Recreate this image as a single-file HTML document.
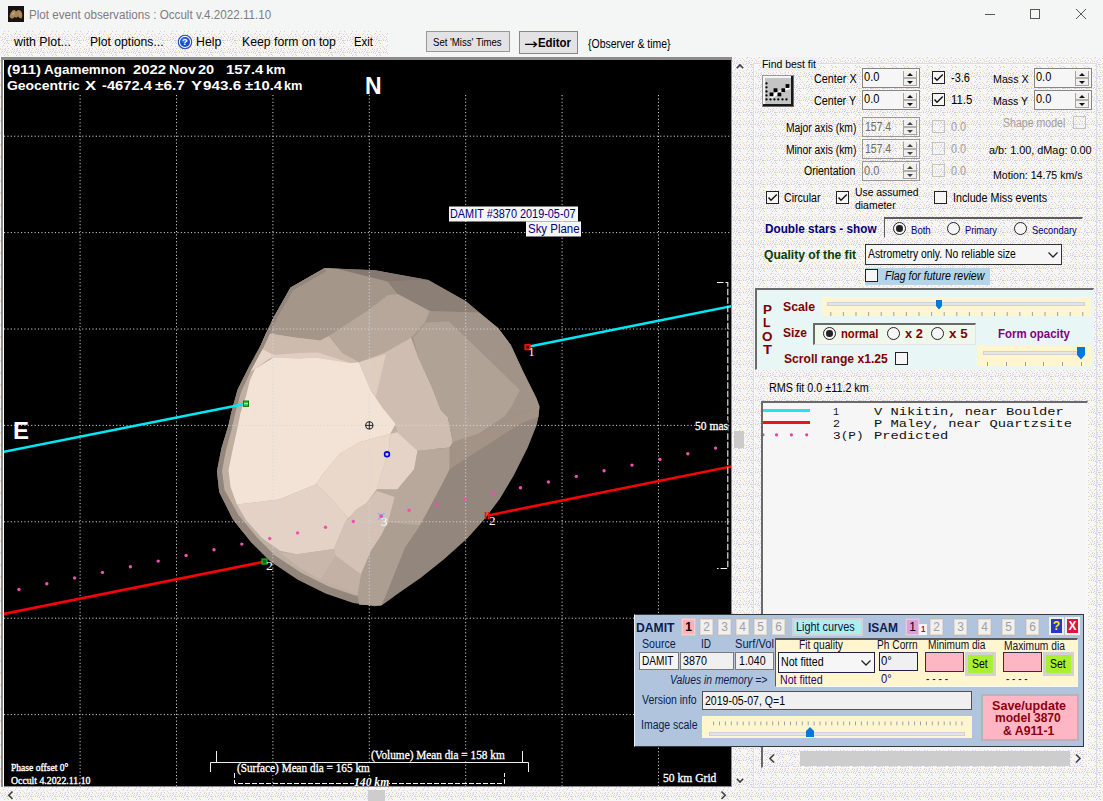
<!DOCTYPE html>
<html lang="en"><head><meta charset="utf-8"><title>Plot event observations : Occult v.4.2022.11.10</title>
<style>
html,body{margin:0;padding:0}
body{width:1103px;height:801px;position:relative;overflow:hidden;background:#f0f0f0;font-family:"Liberation Sans",sans-serif;font-size:12px}
.t{position:absolute;white-space:pre;transform-origin:0 50%}
.b{position:absolute;box-sizing:border-box}
.num{position:absolute;box-sizing:border-box;border:1px solid #8a8684;background:#f5f6f5;width:58px;height:20px}
.num.dis{background:transparent;border-color:#9a9896}
.num i{position:absolute;right:2px;top:2px;width:14px;height:15px;box-sizing:border-box;border:1px solid #a8a4a0;border-top:none;background:#f0f0f0}
.num i:before{content:"";position:absolute;left:0;right:0;top:6px;height:2px;background:#b4b0ac}
.num b{position:absolute;right:6px;width:0;height:0;border-left:3px solid transparent;border-right:3px solid transparent}
.num b.u{top:4px;border-bottom:3px solid #111}
.num b.d{top:12px;border-top:3px solid #111}
.num.dis b.u{border-bottom-color:#444}.num.dis b.d{border-top-color:#444}
.cb{position:absolute;box-sizing:border-box;width:13px;height:13px;border:1px solid #222;background:#f5f6f5}
.cb.dis{border-color:#c4c4c4;background:transparent}
.cb svg{position:absolute;left:0;top:0}
.rb{position:absolute;box-sizing:border-box;width:13px;height:13px;border:1px solid #222;border-radius:50%;background:#f5f6f5}
.rb.on:after{content:"";position:absolute;left:2.2px;top:2.2px;width:6.6px;height:6.6px;border-radius:50%;background:#222}
.nb{position:absolute;box-sizing:border-box;width:15px;height:18px;border:1px solid #c2bcb6;box-shadow:inset 0 0 0 1px #dedad6;background:#f0f0f0;color:#a0a0a0;font-size:12px;line-height:16px;text-align:center}
.tx{position:absolute;box-sizing:border-box;border:1px solid #7a7a7a;background:#f0f0f0}

</style></head>
<body>
<svg class="b" style="left:0;top:0" width="1103" height="801"><defs><pattern id="dth" width="12" height="12" patternUnits="userSpaceOnUse"><rect width="12" height="12" fill="#f6f6f6"/><rect x="2" y="3" width="1" height="1" fill="#c8ccf2"/><rect x="7" y="4" width="1" height="1" fill="#c8ccf2"/><rect x="8" y="7" width="1" height="1" fill="#c8ccf2"/><rect x="5" y="0" width="1" height="1" fill="#c8ccf2"/><rect x="5" y="2" width="1" height="1" fill="#c8ccf2"/><rect x="3" y="9" width="1" height="1" fill="#c8ccf2"/><rect x="2" y="1" width="1" height="1" fill="#c8ccf2"/><rect x="6" y="4" width="1" height="1" fill="#c8ccf2"/><rect x="4" y="7" width="1" height="1" fill="#c8ccf2"/><rect x="3" y="5" width="1" height="1" fill="#c8ccf2"/><rect x="11" y="4" width="1" height="1" fill="#c8ccf2"/><rect x="4" y="3" width="1" height="1" fill="#c8ccf2"/><rect x="1" y="4" width="1" height="1" fill="#c8ccf2"/><rect x="8" y="0" width="1" height="1" fill="#c8ccf2"/><rect x="7" y="10" width="1" height="1" fill="#c8ccf2"/><rect x="7" y="6" width="1" height="1" fill="#c8ccf2"/><rect x="7" y="2" width="1" height="1" fill="#f4d8c0"/><rect x="4" y="1" width="1" height="1" fill="#f4d8c0"/><rect x="5" y="6" width="1" height="1" fill="#f4d8c0"/><rect x="10" y="10" width="1" height="1" fill="#f4d8c0"/><rect x="0" y="1" width="1" height="1" fill="#f4d8c0"/><rect x="11" y="11" width="1" height="1" fill="#f4d8c0"/><rect x="9" y="4" width="1" height="1" fill="#f4d8c0"/><rect x="2" y="10" width="1" height="1" fill="#f4d8c0"/><rect x="8" y="4" width="1" height="1" fill="#f4d8c0"/><rect x="10" y="2" width="1" height="1" fill="#f4d8c0"/><rect x="11" y="3" width="1" height="1" fill="#f4d8c0"/><rect x="0" y="0" width="1" height="1" fill="#f4d8c0"/><rect x="10" y="6" width="1" height="1" fill="#fff6c0"/><rect x="7" y="7" width="1" height="1" fill="#fff6c0"/></pattern></defs><rect width="1103" height="801" fill="url(#dth)"/></svg>
<!-- title bar -->
<div class="b" style="left:0;top:0;width:1103px;height:31px;background:#f4f6f5"></div>
<div class="b" style="left:388px;top:31px;width:715px;height:25px;background:#f4f6f5"></div>
<div class="b" style="left:8px;top:6px;width:16px;height:16px;background:#17130f"></div>
<svg class="b" style="left:8px;top:6px" width="16" height="16"><path d="M1.5 10.5 L2.5 7 L4.5 4.5 L6.5 3.8 L8 5.5 L10 4 L12.5 4.5 L14 7 L14.3 10 L13.5 12.5 L11.5 12 L10 10.5 L8.5 11.8 L6.5 11 L5 12.5 L3 12.5 Z" fill="#a8845c"/><path d="M3.5 8.5 L5 5.8 L7 6.5 L6 9.5 Z" fill="#c8a070"/><path d="M10 6 L12.5 6.5 L13 9.5 L11 9 Z" fill="#b89064"/></svg>
<svg class="b" style="left:980px;top:4px" width="120" height="22"><g stroke="#5a5652" stroke-width="1" fill="none"><path d="M5 10.5H15"/><rect x="50.5" y="5.5" width="9" height="9"/><path d="M96 5L106 15M106 5L96 15"/></g></svg>
<!-- help icon -->
<svg class="b" style="left:177px;top:34px" width="16" height="16"><circle cx="8" cy="8" r="6.7" fill="#f4f6fa" stroke="#2848b4" stroke-width="1.1"/><circle cx="8" cy="8" r="5" fill="#1a48d2"/><circle cx="7" cy="6.4" r="2.6" fill="#4a78ea" opacity=".7"/><text x="8" y="11.4" text-anchor="middle" font-family="Liberation Sans, sans-serif" font-weight="bold" font-size="9.5" fill="#fff">?</text></svg>
<!-- toolbar buttons -->
<div class="b" style="left:426px;top:31px;width:84px;height:21px;border:1px solid #9a9692;background:#e3e2e4"></div>
<div class="b" style="left:519px;top:31px;width:59px;height:23px;border:1px solid #8a8682;background:#e3e2e4"></div>

<!-- plot frame -->
<div class="b" style="left:1px;top:57px;width:731px;height:730px;background:#8c8c8c"></div>
<div class="b" style="left:3px;top:60px;width:1px;height:727px;background:#fff"></div>
<div class="b" style="left:4px;top:60px;width:727px;height:726px;background:#000"></div>
<svg class="b" style="left:0;top:0" width="1103" height="801" viewBox="0 0 1103 801">
<defs><clipPath id="pc"><rect x="4" y="60" width="727" height="726"/></clipPath></defs>
<g clip-path="url(#pc)">
<polygon points="324.6,268.1 375.0,270.2 428.0,280.2 466.3,301.4 498.1,327.9 510.8,344.9 523.6,372.5 536.3,397.9 539.5,406.4 538.4,417.0 536.7,425.0 527.5,448.1 513.6,475.8 499.7,498.9 485.9,517.4 467.4,538.2 444.3,559.0 421.2,577.5 398.1,593.6 381.9,605.2 375.0,606.3 353.2,602.9 325.5,593.6 297.8,579.8 270.1,561.3 251.6,542.8 233.1,519.7 219.2,492.0 216.9,471.2 221.5,448.1 228.5,425.0 231.2,412.8 237.6,389.5 248.2,368.2 260.9,344.9 273.7,317.3 290.6,287.6" fill="#93867c"/>
<polygon points="276.0,320.0 263.0,347.0 251.0,370.0 241.0,392.0 235.0,414.0 232.0,428.0 226.0,450.0 222.0,471.0 224.5,490.0 238.5,515.0 257.0,537.5 275.0,555.5 301.5,573.0 328.5,586.5 355.0,595.5 381.0,598.0 384.5,598.0 404.7,547.4 420.0,525.0 440.0,430.0 430.0,311.0 330.0,300.0" fill="#bfaea2"/>
<polygon points="325.3,267.9 290.6,287.6 273.7,317.3 266.0,333.0 295.0,337.5 320.2,340.4 328.7,336.2 367.4,310.9 387.6,294.9 397.8,294.0 387.6,281.4 370.8,272.1 337.1,268.7" fill="#a5968a"/>
<polygon points="337.1,268.7 375.0,270.2 428.1,279.7 387.6,281.4" fill="#857870"/>
<polygon points="387.6,281.4 428.1,279.7 465.2,300.8 478.7,312.6 451.7,311.7 429.8,310.9 397.8,294.0" fill="#8c7f76"/>
<polygon points="328.7,336.2 367.4,310.9 387.6,294.9 397.8,294.0 429.8,310.9 424.7,322.7 411.2,337.8 384.3,353.0 359.0,362.3 342.1,353.0" fill="#b7a79b"/>
<polygon points="266.0,333.0 295.0,337.5 320.2,340.4 328.7,336.2 342.1,353.0 359.0,362.3 350.6,363.1 315.2,357.0 300.0,358.0 273.7,357.0 262.0,349.0 258.0,352.0" fill="#cdbbae"/>
<polygon points="262.0,349.0 273.7,355.0 300.0,353.0 318.0,352.5 350.6,363.1 315.2,357.5 300.0,358.5 273.7,357.5 256.0,362.0" fill="#dfcec1"/>
<polygon points="256.0,357.0 262.0,349.0 273.7,355.5 255.0,369.0 250.0,372.0" fill="#e6d5c8"/>
<polygon points="255.0,369.0 273.7,357.5 300.0,358.5 315.2,357.5 350.6,363.1 359.0,362.3 370.8,390.1 382.1,406.9 395.6,423.8 390.3,433.7 360.0,442.1 339.7,453.9 322.9,474.2 316.1,484.3 279.0,499.4 236.9,504.5 230.5,487.0 228.5,470.0 233.0,448.0 237.0,430.0 240.5,413.0 246.0,396.0 250.0,380.0" fill="#f3e3d6"/>
<polygon points="390.3,433.7 388.6,450.6 376.8,489.3 366.7,502.8 348.1,518.0 333.0,501.1 316.1,484.3 322.9,474.2 339.7,453.9 360.0,442.1" fill="#ead8ca"/>
<polygon points="236.9,504.5 279.0,499.4 316.1,484.3 333.0,501.1 348.1,518.0 344.9,523.0 333.9,549.1 296.9,554.2 280.0,550.8 262.0,538.0 246.0,520.0" fill="#e3d2c5"/>
<polygon points="359.0,362.3 384.3,353.0 411.2,337.8 418.0,356.4 431.0,385.0 441.1,410.3 447.9,417.0 452.9,442.3 449.6,447.4 417.5,450.7 397.3,432.2 395.6,423.8 382.1,406.9 370.8,390.1" fill="#cebdb0"/>
<polygon points="359.0,362.3 386.0,353.9 375.8,396.8 370.8,390.1" fill="#dfcdc0"/>
<polygon points="390.3,433.7 397.3,432.2 417.5,450.7 414.2,469.3 397.3,489.5 376.8,489.3 388.6,450.6" fill="#e4d3c6"/>
<polygon points="411.2,337.8 424.7,322.7 429.8,310.9 478.7,312.6 498.1,327.9 510.8,344.9 523.6,372.5 536.3,397.9 539.5,406.4 520.0,413.7 501.8,422.1 478.2,433.9 452.9,442.3 447.9,417.0 441.1,410.3 431.0,385.0 418.0,356.4" fill="#a19387"/>
<polygon points="413.1,337.5 426.2,322.5 448.7,321.5 463.7,335.6 519.9,389.9 512.4,404.9 504.9,416.1 478.2,433.9 452.9,442.3 447.9,417.0 441.1,410.3 431.0,385.0 418.0,356.4" fill="#b1a296"/>
<polygon points="452.9,442.3 478.2,433.9 501.8,422.1 520.0,413.7 539.5,406.4 538.4,417.0 520.0,423.8 491.7,442.3 464.7,459.2 449.6,469.3 449.6,447.4" fill="#a39386"/>
<polygon points="417.5,450.7 449.6,447.4 449.6,469.3 441.1,486.1 419.9,525.5 387.9,522.1 394.6,496.9 376.9,491.0 376.8,489.3 397.3,489.5 414.2,469.3" fill="#b8a89b"/>
<polygon points="344.9,523.0 355.8,509.5 366.7,502.8 376.9,491.0 394.6,496.9 387.9,522.1 381.1,535.6 371.0,550.8 360.9,574.4 335.6,555.8 333.9,549.1" fill="#d3c2b5"/>
<polygon points="371.0,550.8 381.1,535.6 387.9,522.1 419.9,525.5 404.7,547.4 384.5,598.0 381.1,605.6 359.2,604.7 357.5,594.6 360.9,574.4" fill="#ad9e92"/>
<polygon points="296.9,554.2 333.9,549.1 335.6,555.8 320.5,579.4 300.0,568.0 280.0,552.5" fill="#c8b7aa"/>
<polygon points="335.6,555.8 360.9,574.4 357.5,594.6 320.5,579.4" fill="#c2b1a4"/>
<clipPath id="sc"><polygon points="324.6,268.1 375.0,270.2 428.0,280.2 466.3,301.4 498.1,327.9 510.8,344.9 523.6,372.5 536.3,397.9 539.5,406.4 538.4,417.0 536.7,425.0 527.5,448.1 513.6,475.8 499.7,498.9 485.9,517.4 467.4,538.2 444.3,559.0 421.2,577.5 398.1,593.6 381.9,605.2 375.0,606.3 353.2,602.9 325.5,593.6 297.8,579.8 270.1,561.3 251.6,542.8 233.1,519.7 219.2,492.0 216.9,471.2 221.5,448.1 228.5,425.0 231.2,412.8 237.6,389.5 248.2,368.2 260.9,344.9 273.7,317.3 290.6,287.6"/></clipPath>
<polyline points="251.6,542.8 233.1,519.7 219.2,492.0 216.9,471.2 221.5,448.1 228.5,425.0 231.2,412.8 237.6,389.5 248.2,368.2 260.9,344.9 273.7,317.3 290.6,287.6 324.6,268.1" fill="none" stroke="#93867c" stroke-width="7" stroke-linejoin="round" clip-path="url(#sc)"/>
<g stroke="#d6d6d6" stroke-width="1" stroke-dasharray="1.1 2.3" fill="none">
<path d="M80.1 95V786"/>
<path d="M176.5 95V786"/>
<path d="M272.9 95V786"/>
<path d="M369.3 95V786"/>
<path d="M465.7 95V786"/>
<path d="M562.1 95V786"/>
<path d="M658.5 95V786"/>
<path d="M4 136.2H731"/>
<path d="M4 232.6H731"/>
<path d="M4 329.0H731"/>
<path d="M4 425.4H731"/>
<path d="M4 521.8H731"/>
<path d="M4 618.2H731"/>
<path d="M4 714.6H731"/>
</g>
<g stroke-width="2.6" fill="none" stroke-linecap="butt">
<path d="M0 452.5L246 403.7" stroke="#00e8f4"/>
<path d="M527 347.1L735 305.4" stroke="#00e8f4"/>
<path d="M0 614.7L265 561.5" stroke="#f80404"/>
<path d="M488 515.4L735 465.7" stroke="#f80404"/>
</g>
<rect x="243.5" y="401" width="5" height="5.4" fill="#30c030" stroke="#0a7a0a" stroke-width="1"/>
<path d="M244 403.7h4" stroke="#d8f4d8" stroke-width="1"/>
<rect x="262" y="559" width="5" height="5" fill="#0c700c" stroke="#28b428" stroke-width="1.2"/>
<rect x="525.3" y="344.8" width="4.6" height="4.6" fill="#501010" stroke="#f01010" stroke-width="1.8"/>
<path d="M485.5 512v7M488.5 512v7" stroke="#f01010" stroke-width="1.6"/>
<circle cx="18.9" cy="589.4" r="1.7" fill="#f050b0"/>
<circle cx="46.8" cy="583.7" r="1.7" fill="#f050b0"/>
<circle cx="74.6" cy="578.0" r="1.7" fill="#f050b0"/>
<circle cx="102.5" cy="572.4" r="1.7" fill="#f050b0"/>
<circle cx="130.4" cy="566.8" r="1.7" fill="#f050b0"/>
<circle cx="158.2" cy="561.1" r="1.7" fill="#f050b0"/>
<circle cx="186.1" cy="555.5" r="1.7" fill="#f050b0"/>
<circle cx="214.0" cy="549.8" r="1.7" fill="#f050b0"/>
<circle cx="241.8" cy="544.1" r="1.7" fill="#f050b0"/>
<circle cx="269.7" cy="538.5" r="1.7" fill="#f050b0"/>
<circle cx="297.6" cy="532.9" r="1.7" fill="#f050b0"/>
<circle cx="325.5" cy="527.2" r="1.7" fill="#f050b0"/>
<circle cx="353.3" cy="521.5" r="1.7" fill="#f050b0"/>
<circle cx="381.2" cy="515.9" r="1.7" fill="#f050b0"/>
<circle cx="409.1" cy="510.2" r="1.7" fill="#f050b0"/>
<circle cx="436.9" cy="504.6" r="1.7" fill="#f050b0"/>
<circle cx="464.8" cy="498.9" r="1.7" fill="#f050b0"/>
<circle cx="492.7" cy="493.3" r="1.7" fill="#f050b0"/>
<circle cx="520.5" cy="487.7" r="1.7" fill="#f050b0"/>
<circle cx="548.4" cy="482.0" r="1.7" fill="#f050b0"/>
<circle cx="576.3" cy="476.4" r="1.7" fill="#f050b0"/>
<circle cx="604.1" cy="470.7" r="1.7" fill="#f050b0"/>
<circle cx="632.0" cy="465.1" r="1.7" fill="#f050b0"/>
<circle cx="659.9" cy="459.4" r="1.7" fill="#f050b0"/>
<circle cx="687.8" cy="453.8" r="1.7" fill="#f050b0"/>
<circle cx="715.6" cy="448.1" r="1.7" fill="#f050b0"/>
<path d="M378 513l6.5 6.5M384.5 513l-6.5 6.5" stroke="#8cb8f0" stroke-width="1.6"/>
<circle cx="381.2" cy="516.2" r="1.7" fill="#f050b0"/>
<circle cx="369.3" cy="425.4" r="3.6" fill="#f5e6d9" stroke="#222" stroke-width="1.1"/><path d="M365.5 425.4h7.6M369.3 421.6v7.6" stroke="#222" stroke-width="1"/>
<circle cx="387" cy="454.3" r="2.4" fill="none" stroke="#0000f0" stroke-width="1.7"/>
<rect x="449" y="206.5" width="129" height="15" fill="#f5f6f5"/>
<rect x="526" y="221.5" width="55" height="15" fill="#f5f6f5"/>
<path d="M717 282.5H727.8V568.5H717" stroke="#f4f4f4" stroke-width="1.1" stroke-dasharray="6.5 2" fill="none"/>
<g stroke="#f0f0f0" stroke-width="1" fill="none">
<path d="M210.5 772V762.5H528.5V772"/>
<path d="M216.5 762V751M522.5 762V751"/>
<path d="M234.5 773V783.5H504.5V773" stroke-dasharray="5 2"/>
</g>
</g></svg>
<!-- plot scrollbars -->

<div class="b" style="left:734px;top:431px;width:10px;height:17px;background:#cbcbcb"></div>
<svg class="b" style="left:732px;top:57px" width="17" height="731"><g stroke="#404040" stroke-width="1.6" fill="none"><path d="M4.8 11.2L8 8L11.2 11.2"/><path d="M4.8 721.8L8 725L11.2 721.8"/></g></svg>

<div class="b" style="left:368px;top:790px;width:17px;height:11px;background:#cdcdcd"></div>
<svg class="b" style="left:0;top:787px" width="749" height="14"><g stroke="#404040" stroke-width="1.6" fill="none"><path d="M12.5 4.5L8.8 8.2L12.5 12"/><path d="M721.5 4.5L725.2 8.2L721.5 12"/></g></svg>

<!-- Find best fit group box -->
<div class="b" style="left:753px;top:63px;width:344px;height:725px;border:1px solid #dcdcdc;box-shadow:inset 1px 1px 0 #fafafa"></div>
<!-- best-fit button -->
<div class="b" style="left:762px;top:75px;width:32px;height:32px;background:#c4c4c4;border:1px solid #6a6a6a;border-top-color:#9a9a9a;border-left-color:#9a9a9a;box-shadow:inset -2px -2px 0 #181818, inset 2px 2px 0 #f4f4f4"></div>
<svg class="b" style="left:762px;top:75px" width="32" height="32"><path d="M8 22.3L28 12" stroke="#fff" stroke-width="3" fill="none"/><g fill="#000"><circle cx="4.5" cy="8.4" r="1.15"/><circle cx="4.5" cy="12.3" r="1.15"/><circle cx="4.5" cy="16.5" r="1.15"/><circle cx="4.5" cy="20.4" r="1.15"/><circle cx="4.5" cy="24.4" r="1.15"/><circle cx="8.5" cy="24.4" r="1.15"/><circle cx="12.4" cy="24.4" r="1.15"/><circle cx="16.3" cy="24.4" r="1.15"/><circle cx="20.5" cy="24.4" r="1.15"/><circle cx="24.5" cy="24.4" r="1.15"/><rect x="7.6" y="17.5" width="3.8" height="3.8"/><rect x="11.6" y="13.3" width="3.8" height="3.8"/><rect x="15.5" y="17.5" width="3.8" height="3.8"/><rect x="19.4" y="13.3" width="3.8" height="3.8"/><rect x="23.6" y="9.1" width="3.8" height="3.8"/></g></svg>

<div class="num" style="left:862px;top:68px"><i></i><b class="u"></b><b class="d"></b></div>
<div class="num" style="left:862px;top:90px"><i></i><b class="u"></b><b class="d"></b></div>
<div class="num dis" style="left:862px;top:117px"><i></i><b class="u"></b><b class="d"></b></div>
<div class="num dis" style="left:862px;top:139px"><i></i><b class="u"></b><b class="d"></b></div>
<div class="num dis" style="left:862px;top:161px"><i></i><b class="u"></b><b class="d"></b></div>
<div class="num" style="left:1034px;top:68px"><i></i><b class="u"></b><b class="d"></b></div>
<div class="num" style="left:1034px;top:90px"><i></i><b class="u"></b><b class="d"></b></div>

<div class="cb" style="left:932px;top:71px"><svg width="11" height="11"><path d="M1.5 5.5L4 8.2L9.8 2.6" stroke="#111" stroke-width="1.4" fill="none"/></svg></div>
<div class="cb" style="left:932px;top:93px"><svg width="11" height="11"><path d="M1.5 5.5L4 8.2L9.8 2.6" stroke="#111" stroke-width="1.4" fill="none"/></svg></div>
<div class="cb dis" style="left:932px;top:120px"></div>
<div class="cb dis" style="left:932px;top:142px"></div>
<div class="cb dis" style="left:932px;top:164px"></div>
<div class="cb dis" style="left:1073px;top:116px"></div>
<div class="cb" style="left:766px;top:191px"><svg width="11" height="11"><path d="M1.5 5.5L4 8.2L9.8 2.6" stroke="#111" stroke-width="1.4" fill="none"/></svg></div>
<div class="cb" style="left:836px;top:191px"><svg width="11" height="11"><path d="M1.5 5.5L4 8.2L9.8 2.6" stroke="#111" stroke-width="1.4" fill="none"/></svg></div>
<div class="cb" style="left:934px;top:191px"></div>

<!-- double stars radio group -->
<div class="b" style="left:884px;top:217px;width:199px;height:21px;border:1px solid #f8f8f8;border-top:2px solid #605c58;border-left:1px solid #605c58"></div>
<div class="rb on" style="left:893px;top:222px"></div>
<div class="rb" style="left:947px;top:222px"></div>
<div class="rb" style="left:1014px;top:222px"></div>
<!-- quality combo -->
<div class="b" style="left:865px;top:244px;width:197px;height:21px;border:1px solid #333;background:#f5f6f5"></div>
<svg class="b" style="left:1046px;top:250px" width="14" height="10"><path d="M2.5 2.5L7 7L11.5 2.5" stroke="#222" stroke-width="1.3" fill="none"/></svg>
<div class="b" style="left:865px;top:268px;width:125px;height:17px;background:#b4d4e8"></div>
<div class="cb" style="left:865px;top:269px"></div>

<!-- PLOT panel -->
<div class="b" style="left:755px;top:288px;width:339px;height:82px;background:#e9f6f6;border:1px solid #f4f4f4;border-top:2px solid #6a6a6a;border-left:2px solid #6a6a6a"></div>
<div class="b" style="left:822px;top:297px;width:269px;height:19px;background:#fff6d0"></div>
<div class="b" style="left:827px;top:302px;width:258px;height:4px;background:#e4e4e8;border:1px solid #d0d0d8"></div>
<svg class="b" style="left:822px;top:297px" width="269" height="19"><g stroke="#98a0b4" stroke-width="1">
<path d="M8.8 15v4M21.4 15v4M34 15v4M46.6 15v4M59.2 15v4M71.8 15v4M84.4 15v4M97 15v4M109.6 15v4M122.2 15v4M134.8 15v4M147.4 15v4M160 15v4M172.6 15v4M185.2 15v4M197.8 15v4M210.4 15v4M223 15v4M235.6 15v4M248.2 15v4M260.8 15v4"/></g>
<path d="M114 3h6v6l-3 3.5l-3-3.5z" fill="#0078d7"/></svg>
<div class="b" style="left:813px;top:323px;width:163px;height:22px;background:#f0f8ec;border:1px solid #e4e4e4;border-top:2px solid #6a6a6a;border-left:2px solid #6a6a6a"></div>
<div class="rb on" style="left:823px;top:327px"></div>
<div class="rb" style="left:887px;top:327px"></div>
<div class="rb" style="left:931px;top:327px"></div>
<div class="cb" style="left:895px;top:352px"></div>
<div class="b" style="left:977px;top:345px;width:115px;height:21px;background:#fff6d0"></div>
<div class="b" style="left:983px;top:351px;width:101px;height:4px;background:#e4e4e8;border:1px solid #d0d0d8"></div>
<svg class="b" style="left:977px;top:345px" width="115" height="21"><g stroke="#98a0b4" stroke-width="1"><path d="M10.5 17v4M29.5 17v4M48.5 17v4M66.5 17v4M85.5 17v4M104.5 17v4"/></g>
<path d="M100 2h8v8l-4 4.5l-4-4.5z" fill="#0078d7"/></svg>

<!-- list box -->
<div class="b" style="left:761px;top:401px;width:327px;height:367px;background:#f5f6f5;border:1px solid #f8f8f8;border-top:2px solid #6a6a6a;border-left:2px solid #6a6a6a"></div>
<div class="b" style="left:763px;top:409px;width:47px;height:3px;background:#1ee6f0"></div>
<div class="b" style="left:763px;top:421px;width:47px;height:3px;background:#f01414"></div>
<svg class="b" style="left:763px;top:430px" width="50" height="10"><g fill="#f03c9c"><circle cx="0" cy="4.8" r="1.5"/><circle cx="13.5" cy="4.8" r="1.6"/><circle cx="28.4" cy="4.8" r="1.6"/><circle cx="43.7" cy="4.8" r="1.6"/></g></svg>
<svg class="b" style="left:763px;top:750px" width="324" height="17"><rect width="324" height="17" fill="url(#dth)"/></svg>
<div class="b" style="left:800px;top:751px;width:270px;height:15px;background:#cdcdcd"></div>
<svg class="b" style="left:763px;top:750px" width="324" height="17"><g stroke="#404040" stroke-width="1.6" fill="none"><path d="M11 4.5L7 8.5L11 12.5"/><path d="M313 4.5L317 8.5L313 12.5"/></g></svg>

<!-- DAMIT panel -->
<div class="b" style="left:634px;top:614px;width:450px;height:133px;background:#b0c4de;border:1px solid #383838;border-left-color:#eef2f8"></div>
<div class="nb" style="left:681px;top:618px;border-color:#d8c4bc;box-shadow:inset 0 0 0 1px #f4d0cc;background:#ffb0bc;color:#000;font-weight:bold">1</div>
<div class="nb" style="left:699px;top:618px">2</div>
<div class="nb" style="left:717px;top:618px">3</div>
<div class="nb" style="left:735px;top:618px">4</div>
<div class="nb" style="left:753px;top:618px">5</div>
<div class="nb" style="left:771px;top:618px">6</div>
<div class="b" style="left:792px;top:618px;width:71px;height:18px;background:#aeeeee;border:2px solid #d8d0d8"></div>
<div class="nb" style="left:905px;top:618px;border-color:#d0c4c8;box-shadow:inset 0 0 0 1px #e8c8e0;background:#dca0dc;color:#000">1</div>
<div class="b" style="left:919px;top:624px;width:8px;height:11px;background:#f5f6f5"></div>
<div class="t" style="left:920.5px;top:623px;font:bold 9px/12px 'Liberation Sans',sans-serif;color:#d01010;transform:scaleX(.9)">1</div>
<div class="nb" style="left:929px;top:618px">2</div>
<div class="nb" style="left:953px;top:618px">3</div>
<div class="nb" style="left:977px;top:618px">4</div>
<div class="nb" style="left:1001px;top:618px">5</div>
<div class="nb" style="left:1025px;top:618px">6</div>
<div class="b" style="left:1049px;top:617px;width:15px;height:18px;background:#2a36c4;border:2px solid #f0f0f0;color:#ffee00;font:bold 12px/14px 'Liberation Sans',sans-serif;text-align:center">?</div>
<div class="b" style="left:1065px;top:617px;width:15px;height:18px;background:#e0143c;border:2px solid #f0f0f0;color:#fff;font:bold 12px/14px 'Liberation Sans',sans-serif;text-align:center">X</div>

<div class="tx" style="left:639px;top:652px;width:40px;height:18px;background:#f5f6f5"></div>
<div class="tx" style="left:680px;top:652px;width:54px;height:18px"></div>
<div class="tx" style="left:735px;top:652px;width:39px;height:18px"></div>
<!-- yellow panel -->
<div class="b" style="left:775px;top:638px;width:303px;height:49px;background:#fff6d0;border:1px solid #f8f8f8;border-top:2px solid #5a5a5a;border-left:1px solid #5a5a5a"></div>
<div class="b" style="left:778px;top:652px;width:97px;height:21px;background:#f5f6f5;border:1px solid #202040"></div>
<svg class="b" style="left:859px;top:658px" width="14" height="10"><path d="M2.5 2.5L7 7L11.5 2.5" stroke="#222" stroke-width="1.3" fill="none"/></svg>
<div class="tx" style="left:879px;top:652px;width:39px;height:19px;border-color:#202040"></div>
<div class="b" style="left:925px;top:652px;width:39px;height:20px;background:#ffb6c4;border:1px solid #303040"></div>
<div class="b" style="left:965px;top:652px;width:31px;height:24px;background:#aaf032;border:3px solid #d4d0d8"></div>
<div class="b" style="left:1003px;top:652px;width:39px;height:20px;background:#ffb6c4;border:1px solid #303040"></div>
<div class="b" style="left:1043px;top:652px;width:31px;height:24px;background:#aaf032;border:3px solid #d4d0d8"></div>

<div class="tx" style="left:702px;top:691px;width:270px;height:19px;border-color:#505050"></div>
<div class="b" style="left:702px;top:716px;width:270px;height:22px;background:#fff6d0"></div>
<div class="b" style="left:709px;top:732px;width:256px;height:4px;background:#e4e4e8;border:1px solid #d0d0d8"></div>
<svg class="b" style="left:702px;top:716px" width="270" height="22"><g stroke="#98a0b4" stroke-width="1"><path d="M11.6 5.5v3.8M17.5 5.5v3.8M23.4 5.5v3.8M29.3 5.5v3.8M35.2 5.5v3.8M41.2 5.5v3.8M47.1 5.5v3.8M53.0 5.5v3.8M58.9 5.5v3.8M64.8 5.5v3.8M70.7 5.5v3.8M76.6 5.5v3.8M82.5 5.5v3.8M88.5 5.5v3.8M94.4 5.5v3.8M100.3 5.5v3.8M106.2 5.5v3.8M112.1 5.5v3.8M118.0 5.5v3.8M123.9 5.5v3.8M129.8 5.5v3.8M135.7 5.5v3.8M141.7 5.5v3.8M147.6 5.5v3.8M153.5 5.5v3.8M159.4 5.5v3.8M165.3 5.5v3.8M171.2 5.5v3.8M177.1 5.5v3.8M183.0 5.5v3.8M189.0 5.5v3.8M194.9 5.5v3.8M200.8 5.5v3.8M206.7 5.5v3.8M212.6 5.5v3.8M218.5 5.5v3.8M224.4 5.5v3.8M230.3 5.5v3.8M236.3 5.5v3.8M242.2 5.5v3.8M248.1 5.5v3.8M254.0 5.5v3.8M259.9 5.5v3.8"/></g>
<path d="M104 21h8v-6l-4-4l-4 4z" fill="#0078d7"/></svg>
<div class="b" style="left:981px;top:694px;width:98px;height:47px;background:#ffb6c4;border:2px solid #b8b4b4"></div>

<div class="t" style="left:29.0px;top:7.0px;line-height:16px;font:normal normal 12px/16px 'Liberation Sans', sans-serif;color:#807a84;transform:scaleX(0.970);">Plot event observations : Occult v.4.2022.11.10</div>
<div class="t" style="left:14.3px;top:34.0px;line-height:16px;font:normal normal 12px/16px 'Liberation Sans', sans-serif;color:#000;transform:scaleX(1.028);">with Plot...</div>
<div class="t" style="left:89.8px;top:34.0px;line-height:16px;font:normal normal 12px/16px 'Liberation Sans', sans-serif;color:#000;transform:scaleX(1.011);">Plot options...</div>
<div class="t" style="left:196.0px;top:34.0px;line-height:16px;font:normal normal 12px/16px 'Liberation Sans', sans-serif;color:#000;transform:scaleX(1.025);">Help</div>
<div class="t" style="left:241.5px;top:34.0px;line-height:16px;font:normal normal 12px/16px 'Liberation Sans', sans-serif;color:#000;transform:scaleX(1.020);">Keep form on top</div>
<div class="t" style="left:354.0px;top:34.0px;line-height:16px;font:normal normal 12px/16px 'Liberation Sans', sans-serif;color:#000;transform:scaleX(0.949);">Exit</div>
<div class="t" style="left:432.7px;top:34.9px;line-height:14px;font:normal normal 11px/14px 'Liberation Sans', sans-serif;color:#000;transform:scaleX(0.871);">Set &#x27;Miss&#x27; Times</div>
<div class="t" style="left:524.1px;top:33.6px;line-height:20px;font:normal normal 15px/20px 'DejaVu Sans', 'Liberation Sans', sans-serif;color:#000;transform:scaleX(1.097);">→</div>
<div class="t" style="left:537.5px;top:34.5px;line-height:16px;font:normal bold 12px/16px 'Liberation Sans', sans-serif;color:#000;transform:scaleX(0.952);">Editor</div>
<div class="t" style="left:587.7px;top:35.5px;line-height:16px;font:normal normal 12px/16px 'Liberation Sans', sans-serif;color:#000;transform:scaleX(0.872);">{Observer &amp; time}</div>
<div class="t" style="left:6.9px;top:60.9px;line-height:18px;font:normal bold 13.6px/18px 'Liberation Sans', sans-serif;color:#fff;transform:scaleX(1.097);">(911)</div>
<div class="t" style="left:44.3px;top:60.9px;line-height:18px;font:normal bold 13.6px/18px 'Liberation Sans', sans-serif;color:#fff;transform:scaleX(0.990);">Agamemnon</div>
<div class="t" style="left:132.5px;top:60.9px;line-height:18px;font:normal bold 13.6px/18px 'Liberation Sans', sans-serif;color:#fff;transform:scaleX(1.091);">2022</div>
<div class="t" style="left:169.0px;top:60.9px;line-height:18px;font:normal bold 13.6px/18px 'Liberation Sans', sans-serif;color:#fff;transform:scaleX(1.047);">Nov</div>
<div class="t" style="left:198.3px;top:60.9px;line-height:18px;font:normal bold 13.6px/18px 'Liberation Sans', sans-serif;color:#fff;transform:scaleX(1.071);">20</div>
<div class="t" style="left:225.9px;top:60.9px;line-height:18px;font:normal bold 13.6px/18px 'Liberation Sans', sans-serif;color:#fff;transform:scaleX(1.099);">157.4</div>
<div class="t" style="left:265.7px;top:60.9px;line-height:18px;font:normal bold 13.6px/18px 'Liberation Sans', sans-serif;color:#fff;transform:scaleX(0.992);">km</div>
<div class="t" style="left:6.9px;top:77.2px;line-height:18px;font:normal bold 13.6px/18px 'Liberation Sans', sans-serif;color:#fff;transform:scaleX(1.025);">Geocentric</div>
<div class="t" style="left:85.4px;top:77.2px;line-height:18px;font:normal bold 13.6px/18px 'Liberation Sans', sans-serif;color:#fff;transform:scaleX(1.223);">X</div>
<div class="t" style="left:102.3px;top:77.2px;line-height:18px;font:normal bold 13.6px/18px 'Liberation Sans', sans-serif;color:#fff;transform:scaleX(1.080);">-4672.4</div>
<div class="t" style="left:155.2px;top:77.2px;line-height:18px;font:normal bold 13.6px/18px 'Liberation Sans', sans-serif;color:#fff;transform:scaleX(1.134);">±6.7</div>
<div class="t" style="left:190.9px;top:77.2px;line-height:18px;font:normal bold 13.6px/18px 'Liberation Sans', sans-serif;color:#fff;transform:scaleX(1.223);">Y</div>
<div class="t" style="left:203.3px;top:77.2px;line-height:18px;font:normal bold 13.6px/18px 'Liberation Sans', sans-serif;color:#fff;transform:scaleX(1.120);">943.6</div>
<div class="t" style="left:244.8px;top:77.2px;line-height:18px;font:normal bold 13.6px/18px 'Liberation Sans', sans-serif;color:#fff;transform:scaleX(1.091);">±10.4</div>
<div class="t" style="left:284.2px;top:77.2px;line-height:18px;font:normal bold 13.6px/18px 'Liberation Sans', sans-serif;color:#fff;transform:scaleX(0.941);">km</div>
<div class="t" style="left:365.1px;top:70.0px;line-height:31px;font:normal bold 24px/31px 'Liberation Sans', sans-serif;color:#fff;transform:scaleX(0.957);">N</div>
<div class="t" style="left:12.8px;top:415.0px;line-height:31px;font:normal bold 24px/31px 'Liberation Sans', sans-serif;color:#fff;transform:scaleX(0.999);">E</div>
<div class="t" style="left:450.4px;top:205.6px;line-height:16px;font:normal normal 12px/16px 'Liberation Sans', sans-serif;color:#000080;transform:scaleX(0.907);">DAMIT #3870 2019-05-07</div>
<div class="t" style="left:527.9px;top:220.8px;line-height:16px;font:normal normal 12px/16px 'Liberation Sans', sans-serif;color:#000080;transform:scaleX(0.955);">Sky Plane</div>
<div class="t" style="left:694.5px;top:419.5px;line-height:12px;font:normal normal 12px/12px 'Liberation Serif', serif;color:#fff;transform:scaleX(0.961);background:#000;-webkit-text-stroke:.3px #fff;">50 mas</div>
<div class="t" style="left:528.5px;top:344.4px;line-height:16px;font:normal normal 12px/16px 'Liberation Serif', serif;color:#fff;transform:scaleX(1.000);">1</div>
<div class="t" style="left:489.0px;top:513.2px;line-height:16px;font:normal normal 12px/16px 'Liberation Serif', serif;color:#fff;transform:scaleX(1.083);">2</div>
<div class="t" style="left:265.5px;top:558.3px;line-height:16px;font:normal normal 12px/16px 'Liberation Serif', serif;color:#fff;transform:scaleX(1.167);">2</div>
<div class="t" style="left:381.0px;top:514.2px;line-height:16px;font:normal normal 12px/16px 'Liberation Serif', serif;color:#fff;transform:scaleX(1.083);">3</div>
<div class="t" style="left:248.0px;top:404.0px;line-height:16px;font:normal normal 12px/16px 'Liberation Serif', serif;color:#f5e6d9;transform:scaleX(0.750);">1</div>
<div class="t" style="left:10.7px;top:761.9px;line-height:11px;font:normal normal 10px/11px 'Liberation Serif', serif;color:#fff;transform:scaleX(0.958);-webkit-text-stroke:.35px #fff;">Phase offset 0°</div>
<div class="t" style="left:10.7px;top:774.6px;line-height:11px;font:normal normal 10px/11px 'Liberation Serif', serif;color:#fff;transform:scaleX(0.977);-webkit-text-stroke:.35px #fff;">Occult 4.2022.11.10</div>
<div class="t" style="left:370.5px;top:750.6px;line-height:9px;font:normal normal 12px/9px 'Liberation Serif', serif;color:#fff;transform:scaleX(0.940);background:#000;-webkit-text-stroke:.3px #fff;">(Volume) Mean dia = 158 km</div>
<div class="t" style="left:236.5px;top:763.9px;line-height:9px;font:normal normal 12px/9px 'Liberation Serif', serif;color:#fff;transform:scaleX(0.937);background:#000;-webkit-text-stroke:.3px #fff;">(Surface) Mean dia = 165 km</div>
<div class="t" style="left:353.9px;top:778.3px;line-height:8px;font:italic bold 12px/8px 'Liberation Serif', serif;color:#fff;transform:scaleX(0.969);background:#000;">140 km</div>
<div class="t" style="left:662.9px;top:772.0px;line-height:12px;font:normal normal 12px/12px 'Liberation Serif', serif;color:#fff;transform:scaleX(0.965);background:#000;-webkit-text-stroke:.3px #fff;">50 km Grid</div>
<div class="t" style="left:761.5px;top:57.0px;line-height:14px;font:normal normal 11px/14px 'Liberation Sans', sans-serif;color:#000;transform:scaleX(0.950);background:#f0f0f0;padding:0 1px;margin-left:-1px;">Find best fit</div>
<div class="t" style="left:813.9px;top:70.7px;line-height:16px;font:normal normal 12px/16px 'Liberation Sans', sans-serif;color:#000;transform:scaleX(0.900);">Center X</div>
<div class="t" style="left:813.9px;top:92.7px;line-height:16px;font:normal normal 12px/16px 'Liberation Sans', sans-serif;color:#000;transform:scaleX(0.893);">Center Y</div>
<div class="t" style="left:786.1px;top:119.6px;line-height:16px;font:normal normal 12px/16px 'Liberation Sans', sans-serif;color:#000;transform:scaleX(0.858);">Major axis (km)</div>
<div class="t" style="left:786.1px;top:141.6px;line-height:16px;font:normal normal 12px/16px 'Liberation Sans', sans-serif;color:#000;transform:scaleX(0.858);">Minor axis (km)</div>
<div class="t" style="left:804.1px;top:162.9px;line-height:16px;font:normal normal 12px/16px 'Liberation Sans', sans-serif;color:#000;transform:scaleX(0.876);">Orientation</div>
<div class="t" style="left:864.1px;top:69.4px;line-height:16px;font:normal normal 12px/16px 'Liberation Sans', sans-serif;color:#000;transform:scaleX(0.923);">0.0</div>
<div class="t" style="left:864.1px;top:91.4px;line-height:16px;font:normal normal 12px/16px 'Liberation Sans', sans-serif;color:#000;transform:scaleX(0.923);">0.0</div>
<div class="t" style="left:864.5px;top:118.7px;line-height:16px;font:normal normal 12px/16px 'Liberation Sans', sans-serif;color:#6d6d6d;transform:scaleX(0.872);">157.4</div>
<div class="t" style="left:864.5px;top:140.7px;line-height:16px;font:normal normal 12px/16px 'Liberation Sans', sans-serif;color:#6d6d6d;transform:scaleX(0.872);">157.4</div>
<div class="t" style="left:864.1px;top:162.7px;line-height:16px;font:normal normal 12px/16px 'Liberation Sans', sans-serif;color:#6d6d6d;transform:scaleX(0.923);">0.0</div>
<div class="t" style="left:950.5px;top:69.8px;line-height:16px;font:normal normal 12px/16px 'Liberation Sans', sans-serif;color:#000;transform:scaleX(0.918);">-3.6</div>
<div class="t" style="left:951.0px;top:91.9px;line-height:16px;font:normal normal 12px/16px 'Liberation Sans', sans-serif;color:#000;transform:scaleX(0.952);">11.5</div>
<div class="t" style="left:950.8px;top:118.8px;line-height:16px;font:normal normal 12px/16px 'Liberation Sans', sans-serif;color:#a0a0a0;transform:scaleX(0.905);">0.0</div>
<div class="t" style="left:950.8px;top:140.8px;line-height:16px;font:normal normal 12px/16px 'Liberation Sans', sans-serif;color:#a0a0a0;transform:scaleX(0.905);">0.0</div>
<div class="t" style="left:950.8px;top:162.5px;line-height:16px;font:normal normal 12px/16px 'Liberation Sans', sans-serif;color:#a0a0a0;transform:scaleX(0.905);">0.0</div>
<div class="t" style="left:992.9px;top:72.2px;line-height:14px;font:normal normal 11px/14px 'Liberation Sans', sans-serif;color:#000;transform:scaleX(0.970);">Mass X</div>
<div class="t" style="left:992.9px;top:94.0px;line-height:14px;font:normal normal 11px/14px 'Liberation Sans', sans-serif;color:#000;transform:scaleX(0.962);">Mass Y</div>
<div class="t" style="left:1035.7px;top:69.4px;line-height:16px;font:normal normal 12px/16px 'Liberation Sans', sans-serif;color:#000;transform:scaleX(0.917);">0.0</div>
<div class="t" style="left:1035.7px;top:91.4px;line-height:16px;font:normal normal 12px/16px 'Liberation Sans', sans-serif;color:#000;transform:scaleX(0.917);">0.0</div>
<div class="t" style="left:1002.7px;top:114.7px;line-height:16px;font:normal normal 12px/16px 'Liberation Sans', sans-serif;color:#a0a0a0;transform:scaleX(0.880);">Shape model</div>
<div class="t" style="left:988.9px;top:143.1px;line-height:14px;font:normal normal 11px/14px 'Liberation Sans', sans-serif;color:#000;transform:scaleX(0.987);">a/b: 1.00, dMag: 0.00</div>
<div class="t" style="left:992.9px;top:168.4px;line-height:14px;font:normal normal 11px/14px 'Liberation Sans', sans-serif;color:#000;transform:scaleX(0.964);">Motion: 14.75 km/s</div>
<div class="t" style="left:784.0px;top:189.6px;line-height:16px;font:normal normal 12px/16px 'Liberation Sans', sans-serif;color:#000;transform:scaleX(0.883);">Circular</div>
<div class="t" style="left:854.7px;top:184.7px;line-height:14px;font:normal normal 11px/14px 'Liberation Sans', sans-serif;color:#000;transform:scaleX(0.943);">Use assumed</div>
<div class="t" style="left:854.7px;top:197.5px;line-height:14px;font:normal normal 11px/14px 'Liberation Sans', sans-serif;color:#000;transform:scaleX(0.949);">diameter</div>
<div class="t" style="left:953.0px;top:189.6px;line-height:16px;font:normal normal 12px/16px 'Liberation Sans', sans-serif;color:#000;transform:scaleX(0.892);">Include Miss events</div>
<div class="t" style="left:765.4px;top:221.0px;line-height:16px;font:normal bold 12px/16px 'Liberation Sans', sans-serif;color:#000080;transform:scaleX(0.978);">Double stars - show</div>
<div class="t" style="left:910.6px;top:222.5px;line-height:14px;font:normal normal 11px/14px 'Liberation Sans', sans-serif;color:#000080;transform:scaleX(0.870);">Both</div>
<div class="t" style="left:964.9px;top:222.5px;line-height:14px;font:normal normal 11px/14px 'Liberation Sans', sans-serif;color:#000080;transform:scaleX(0.845);">Primary</div>
<div class="t" style="left:1031.6px;top:222.5px;line-height:14px;font:normal normal 11px/14px 'Liberation Sans', sans-serif;color:#000080;transform:scaleX(0.850);">Secondary</div>
<div class="t" style="left:764.1px;top:246.2px;line-height:17px;font:normal bold 13px/17px 'Liberation Sans', sans-serif;color:#064006;transform:scaleX(0.930);">Quality of the fit</div>
<div class="t" style="left:867.7px;top:246.2px;line-height:16px;font:normal normal 12px/16px 'Liberation Sans', sans-serif;color:#000;transform:scaleX(0.864);">Astrometry only. No reliable size</div>
<div class="t" style="left:884.5px;top:267.8px;line-height:16px;font:italic normal 12px/16px 'Liberation Sans', sans-serif;color:#000;transform:scaleX(0.881);">Flag for future review</div>
<div class="t" style="left:762.5px;top:302.3px;line-height:16px;font:normal bold 12px/16px 'Liberation Sans', sans-serif;color:#800000;transform:scaleX(1.123);">P</div>
<div class="t" style="left:763.0px;top:315.3px;line-height:16px;font:normal bold 12px/16px 'Liberation Sans', sans-serif;color:#800000;transform:scaleX(1.021);">L</div>
<div class="t" style="left:762.0px;top:328.9px;line-height:16px;font:normal bold 12px/16px 'Liberation Sans', sans-serif;color:#800000;transform:scaleX(1.124);">O</div>
<div class="t" style="left:762.5px;top:341.5px;line-height:16px;font:normal bold 12px/16px 'Liberation Sans', sans-serif;color:#800000;transform:scaleX(1.226);">T</div>
<div class="t" style="left:783.2px;top:298.7px;line-height:16px;font:normal bold 12px/16px 'Liberation Sans', sans-serif;color:#800000;transform:scaleX(1.024);">Scale</div>
<div class="t" style="left:783.2px;top:325.1px;line-height:16px;font:normal bold 12px/16px 'Liberation Sans', sans-serif;color:#800000;transform:scaleX(0.999);">Size</div>
<div class="t" style="left:841.1px;top:326.0px;line-height:16px;font:normal bold 12px/16px 'Liberation Sans', sans-serif;color:#800000;transform:scaleX(0.935);">normal</div>
<div class="t" style="left:905.2px;top:326.0px;line-height:16px;font:normal bold 12px/16px 'Liberation Sans', sans-serif;color:#800000;transform:scaleX(1.067);">x 2</div>
<div class="t" style="left:949.2px;top:326.0px;line-height:16px;font:normal bold 12px/16px 'Liberation Sans', sans-serif;color:#800000;transform:scaleX(1.115);">x 5</div>
<div class="t" style="left:783.7px;top:351.2px;line-height:16px;font:normal bold 12px/16px 'Liberation Sans', sans-serif;color:#800000;transform:scaleX(1.010);">Scroll range x1.25</div>
<div class="t" style="left:998.3px;top:326.0px;line-height:16px;font:normal bold 12px/16px 'Liberation Sans', sans-serif;color:#800080;transform:scaleX(0.955);">Form opacity</div>
<div class="t" style="left:769.0px;top:380.1px;line-height:16px;font:normal normal 12px/16px 'Liberation Sans', sans-serif;color:#000;transform:scaleX(0.898);">RMS fit 0.0 ±11.2 km</div>
<div class="t" style="left:833.0px;top:403.6px;line-height:15px;font:normal normal 11.5px/15px 'Liberation Mono', monospace;color:#111;transform:scaleX(0.869);">1</div>
<div class="t" style="left:873.7px;top:403.6px;line-height:15px;font:normal normal 11.5px/15px 'Liberation Mono', monospace;color:#111;transform:scaleX(1.196);">V Nikitin, near Boulder</div>
<div class="t" style="left:832.5px;top:415.6px;line-height:15px;font:normal normal 11.5px/15px 'Liberation Mono', monospace;color:#111;transform:scaleX(1.014);">2</div>
<div class="t" style="left:873.7px;top:415.6px;line-height:15px;font:normal normal 11.5px/15px 'Liberation Mono', monospace;color:#111;transform:scaleX(1.195);">P Maley, near Quartzsite</div>
<div class="t" style="left:832.5px;top:427.6px;line-height:15px;font:normal normal 11.5px/15px 'Liberation Mono', monospace;color:#111;transform:scaleX(1.105);">3(P)</div>
<div class="t" style="left:873.7px;top:427.6px;line-height:15px;font:normal normal 11.5px/15px 'Liberation Mono', monospace;color:#111;transform:scaleX(1.196);">Predicted</div>
<div class="t" style="left:636.4px;top:618.8px;line-height:17px;font:normal bold 13px/17px 'Liberation Sans', sans-serif;color:#0c1c50;transform:scaleX(0.935);">DAMIT</div>
<div class="t" style="left:868.2px;top:618.8px;line-height:17px;font:normal bold 13px/17px 'Liberation Sans', sans-serif;color:#0c1c50;transform:scaleX(0.920);">ISAM</div>
<div class="t" style="left:796.4px;top:619.3px;line-height:16px;font:normal normal 12px/16px 'Liberation Sans', sans-serif;color:#101040;transform:scaleX(0.906);">Light curves</div>
<div class="t" style="left:641.7px;top:636.2px;line-height:16px;font:normal normal 12px/16px 'Liberation Sans', sans-serif;color:#0c1c50;transform:scaleX(0.886);">Source</div>
<div class="t" style="left:701.3px;top:636.2px;line-height:16px;font:normal normal 12px/16px 'Liberation Sans', sans-serif;color:#0c1c50;transform:scaleX(0.833);">ID</div>
<div class="t" style="left:735.1px;top:636.2px;line-height:16px;font:normal normal 12px/16px 'Liberation Sans', sans-serif;color:#0c1c50;transform:scaleX(0.928);">Surf/Vol</div>
<div class="t" style="left:642.2px;top:653.0px;line-height:16px;font:normal normal 12px/16px 'Liberation Sans', sans-serif;color:#000;transform:scaleX(0.844);">DAMIT</div>
<div class="t" style="left:683.0px;top:653.0px;line-height:16px;font:normal normal 12px/16px 'Liberation Sans', sans-serif;color:#000;transform:scaleX(0.895);">3870</div>
<div class="t" style="left:738.5px;top:653.0px;line-height:16px;font:normal normal 12px/16px 'Liberation Sans', sans-serif;color:#000;transform:scaleX(0.886);">1.040</div>
<div class="t" style="left:670.3px;top:672.1px;line-height:16px;font:italic normal 12px/16px 'Liberation Sans', sans-serif;color:#0c1c50;transform:scaleX(0.861);">Values in memory =&gt;</div>
<div class="t" style="left:798.9px;top:637.2px;line-height:16px;font:normal normal 12px/16px 'Liberation Sans', sans-serif;color:#101030;transform:scaleX(0.855);">Fit quality</div>
<div class="t" style="left:780.9px;top:653.9px;line-height:16px;font:normal normal 12px/16px 'Liberation Sans', sans-serif;color:#000;transform:scaleX(0.887);">Not fitted</div>
<div class="t" style="left:780.1px;top:671.8px;line-height:16px;font:normal normal 12px/16px 'Liberation Sans', sans-serif;color:#2a007a;transform:scaleX(0.887);">Not fitted</div>
<div class="t" style="left:876.9px;top:637.2px;line-height:16px;font:normal normal 12px/16px 'Liberation Sans', sans-serif;color:#101030;transform:scaleX(0.849);">Ph Corrn</div>
<div class="t" style="left:881.3px;top:653.3px;line-height:16px;font:normal normal 12px/16px 'Liberation Sans', sans-serif;color:#000;transform:scaleX(0.940);">0°</div>
<div class="t" style="left:880.8px;top:670.7px;line-height:16px;font:normal normal 12px/16px 'Liberation Sans', sans-serif;color:#2a007a;transform:scaleX(0.932);">0°</div>
<div class="t" style="left:928.0px;top:637.2px;line-height:16px;font:normal normal 12px/16px 'Liberation Sans', sans-serif;color:#101030;transform:scaleX(0.845);">Minimum dia</div>
<div class="t" style="left:1004.0px;top:637.9px;line-height:16px;font:normal normal 12px/16px 'Liberation Sans', sans-serif;color:#101030;transform:scaleX(0.853);">Maximum dia</div>
<div class="t" style="left:971.7px;top:655.8px;line-height:16px;font:normal normal 12px/16px 'Liberation Sans', sans-serif;color:#000;transform:scaleX(0.871);">Set</div>
<div class="t" style="left:1049.7px;top:655.8px;line-height:16px;font:normal normal 12px/16px 'Liberation Sans', sans-serif;color:#000;transform:scaleX(0.871);">Set</div>
<div class="t" style="left:926.4px;top:671.3px;line-height:16px;font:normal normal 12px/16px 'Liberation Sans', sans-serif;color:#2a007a;transform:scaleX(0.850);">- - - -</div>
<div class="t" style="left:1005.7px;top:671.3px;line-height:16px;font:normal normal 12px/16px 'Liberation Sans', sans-serif;color:#2a007a;transform:scaleX(0.835);">- - - -</div>
<div class="t" style="left:641.7px;top:692.2px;line-height:16px;font:normal normal 12px/16px 'Liberation Sans', sans-serif;color:#0c1c50;transform:scaleX(0.871);">Version info</div>
<div class="t" style="left:704.6px;top:692.9px;line-height:16px;font:normal normal 12px/16px 'Liberation Sans', sans-serif;color:#000;transform:scaleX(0.879);">2019-05-07, Q=1</div>
<div class="t" style="left:640.9px;top:717.0px;line-height:16px;font:normal normal 12px/16px 'Liberation Sans', sans-serif;color:#0c1c50;transform:scaleX(0.873);">Image scale</div>
<div class="t" style="left:992.1px;top:696.9px;line-height:17px;font:normal bold 13px/17px 'Liberation Sans', sans-serif;color:#8b0010;transform:scaleX(0.967);">Save/update</div>
<div class="t" style="left:995.4px;top:709.3px;line-height:17px;font:normal bold 13px/17px 'Liberation Sans', sans-serif;color:#8b0010;transform:scaleX(0.929);">model 3870</div>
<div class="t" style="left:1002.7px;top:722.2px;line-height:17px;font:normal bold 13px/17px 'Liberation Sans', sans-serif;color:#8b0010;transform:scaleX(0.942);">&amp; A911-1</div>
</body></html>
